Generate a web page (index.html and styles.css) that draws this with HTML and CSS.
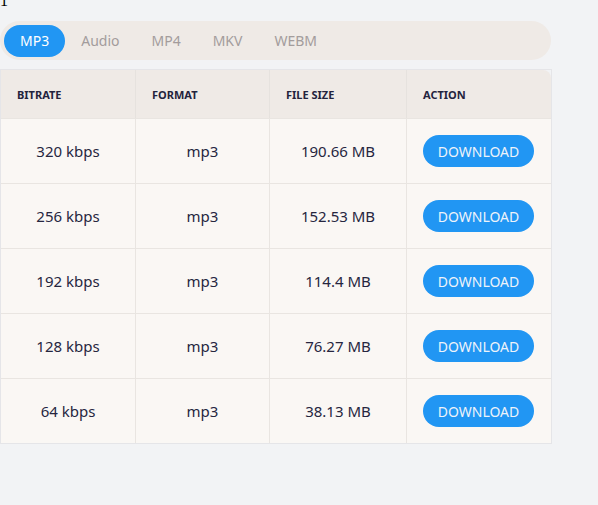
FILE: index.html
```html
<!DOCTYPE html>
<html>
<head>
<meta charset="utf-8">
<link rel="stylesheet" href="styles.css">
</head>
<body>
<div class="num">1</div>
<div class="tabs">
  <button class="tab active">MP3</button>
  <button class="tab">Audio</button>
  <button class="tab">MP4</button>
  <button class="tab">MKV</button>
  <button class="tab">WEBM</button>
</div>
<div class="wrap">
<table class="dl">
  <colgroup>
    <col class="c1"><col class="c2"><col class="c3"><col class="c4">
  </colgroup>
  <thead>
    <tr><th>Bitrate</th><th>Format</th><th>File Size</th><th>Action</th></tr>
  </thead>
  <tbody>
    <tr><td>320 kbps</td><td>mp3</td><td>190.66 MB</td><td class="act"><button class="btn">Download</button></td></tr>
    <tr><td>256 kbps</td><td>mp3</td><td>152.53 MB</td><td class="act"><button class="btn">Download</button></td></tr>
    <tr><td>192 kbps</td><td>mp3</td><td>114.4 MB</td><td class="act"><button class="btn">Download</button></td></tr>
    <tr><td>128 kbps</td><td>mp3</td><td>76.27 MB</td><td class="act"><button class="btn">Download</button></td></tr>
    <tr><td>64 kbps</td><td>mp3</td><td>38.13 MB</td><td class="act"><button class="btn">Download</button></td></tr>
  </tbody>
</table>
</div>
</body>
</html>
```
FILE: styles.css
```css
html, body {
  margin: 0;
  padding: 0;
  background: #f2f3f5;
}
body {
  font-family: "Noto Sans", sans-serif;
  color: #24243f;
}
.num {
  font-family: "Liberation Serif", serif;
  font-size: 16px;
  line-height: 18px;
  margin-top: -8px;
  color: #000;
}
.tabs {
  margin-top: 11px;
  width: 551px;
  box-sizing: border-box;
  height: 39px;
  padding: 4px;
  background: #efeae6;
  border-radius: 20px;
  display: flex;
  align-items: center;
}
.tab {
  border: 0;
  background: transparent;
  font-family: "Noto Sans", sans-serif;
  font-size: 14px;
  color: #a39c9c;
  height: 32px;
  padding: 0 16px;
  border-radius: 16px;
  cursor: pointer;
}
.tab.active {
  background: #2196f3;
  color: #fff;
}
.wrap {
  margin-top: 9px;
  width: 552px;
  box-sizing: border-box;
  border: 1px solid #e5e5e8;
}
.dl {
  width: 550px;
  border-collapse: separate;
  border-spacing: 0;
  table-layout: fixed;
}
.c1 { width: 135px; }
.c2 { width: 134px; }
.c3 { width: 137px; }
.c4 { width: 144px; }
.dl th {
  background: #efeae6;
  height: 48px;
  box-sizing: border-box;
  text-align: left;
  padding: 0 16px;
  font-size: 11px;
  font-weight: 700;
  text-transform: uppercase;
  color: #23233d;
  border-right: 1px solid #e6e2de;
}
.dl th:last-child {
  border-right: 0;
  border-top-right-radius: 8px;
}
.dl td {
  background: #faf7f4;
  height: 65px;
  box-sizing: border-box;
  text-align: center;
  font-size: 15px;
  color: #26263f;
  border-right: 1px solid #e9e5e1;
  border-top: 1px solid #e9e5e1;
  padding: 0 8px;
}
.dl td:last-child { border-right: 0; }
.dl td.act {
  text-align: left;
  padding-left: 16px;
}
.btn {
  border: 0;
  background: #2196f3;
  color: #eef3fa;
  font-family: "Noto Sans", sans-serif;
  font-size: 14px;
  text-transform: uppercase;
  height: 32px;
  width: 111px;
  border-radius: 16px;
  padding: 0;
  cursor: pointer;
}
```
